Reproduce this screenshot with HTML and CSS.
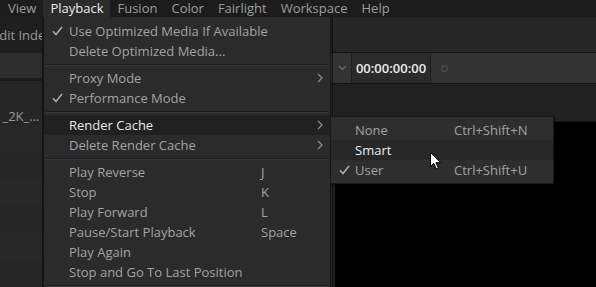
FILE: index.html
```html
<!DOCTYPE html>
<html lang="en">
<head>
    <meta charset="UTF-8">
    <title>Playback menu</title>
    <link rel="stylesheet" href="styles.css">
</head>
<body>
    <div class="menubar">
        <span class="menubar-item first">View</span>
        <span class="menubar-item activo">Playback</span>
        <span class="menubar-item">Fusion</span>
        <span class="menubar-item">Color</span>
        <span class="menubar-item">Fairlight</span>
        <span class="menubar-item">Workspace</span>
        <span class="menubar-item">Help</span>
    </div>

    <div class="workspace">
        <div class="col-left">
            <div class="left-top"><span class="clip-text">Edit Index</span></div>
            <div class="toolbar"></div>
            <div class="lista">
                <div class="fila fila-texto"><span class="clip-file">1_2K_...</span></div>
                <div class="fila"></div>
                <div class="fila"></div>
                <div class="fila"></div>
                <div class="fila"></div>
                <div class="fila"></div>
                <div class="fila"></div>
            </div>
        </div>
        <div class="col-mid">
            <div class="left-top"></div>
            <div class="toolbar"></div>
        </div>
        <div class="col-right">
            <div class="right-top"></div>
            <div class="toolbar tc-bar">
                <span class="tc-chevron">
                    <svg width="9" height="6" viewBox="0 0 9 6"><path d="M1 1 L4.5 4.5 L8 1" fill="none" stroke="#6a6a6a" stroke-width="1.2"/></svg>
                </span>
                <span class="timecode">00:00:00:00</span>
                <span class="tc-dot"></span>
            </div>
            <div class="right-gap"></div>
            <div class="viewer"></div>
        </div>
    </div>

    <!-- Playback dropdown -->
    <div class="menu">
        <div class="menu-row">
            <span class="check"><svg width="11" height="10" viewBox="0 0 11 10"><path d="M1 5.2 L4 8.6 L10 1" fill="none" stroke="#a8a8a8" stroke-width="1.6"/></svg></span>
            <span class="label">Use Optimized Media If Available</span>
        </div>
        <div class="menu-row"><span class="check"></span><span class="label">Delete Optimized Media...</span></div>
        <div class="sep"></div>
        <div class="menu-row">
            <span class="check"></span><span class="label">Proxy Mode</span><span class="atajo"></span>
            <span class="flecha"><svg width="6" height="10" viewBox="0 0 6 10"><path d="M1 1 L5 5 L1 9" fill="none" stroke="#8a8a8a" stroke-width="1.3"/></svg></span>
        </div>
        <div class="menu-row">
            <span class="check"><svg width="11" height="10" viewBox="0 0 11 10"><path d="M1 5.2 L4 8.6 L10 1" fill="none" stroke="#a8a8a8" stroke-width="1.6"/></svg></span>
            <span class="label">Performance Mode</span>
        </div>
        <div class="sep"></div>
        <div class="menu-row resaltado">
            <span class="check"></span><span class="label">Render Cache</span><span class="atajo"></span>
            <span class="flecha"><svg width="6" height="10" viewBox="0 0 6 10"><path d="M1 1 L5 5 L1 9" fill="none" stroke="#8a8a8a" stroke-width="1.3"/></svg></span>
        </div>
        <div class="menu-row">
            <span class="check"></span><span class="label">Delete Render Cache</span><span class="atajo"></span>
            <span class="flecha"><svg width="6" height="10" viewBox="0 0 6 10"><path d="M1 1 L5 5 L1 9" fill="none" stroke="#8a8a8a" stroke-width="1.3"/></svg></span>
        </div>
        <div class="sep"></div>
        <div class="menu-row"><span class="check"></span><span class="label">Play Reverse</span><span class="atajo">J</span></div>
        <div class="menu-row"><span class="check"></span><span class="label">Stop</span><span class="atajo">K</span></div>
        <div class="menu-row"><span class="check"></span><span class="label">Play Forward</span><span class="atajo">L</span></div>
        <div class="menu-row"><span class="check"></span><span class="label">Pause/Start Playback</span><span class="atajo">Space</span></div>
        <div class="menu-row"><span class="check"></span><span class="label">Play Again</span></div>
        <div class="menu-row"><span class="check"></span><span class="label">Stop and Go To Last Position</span></div>
        <div class="sep"></div>
    </div>

    <!-- Render Cache submenu -->
    <div class="submenu">
        <div class="sub-row"><span class="check"></span><span class="label">None</span><span class="atajo">Ctrl+Shift+N</span></div>
        <div class="sub-row resaltado"><span class="check"></span><span class="label">Smart</span><span class="atajo"></span></div>
        <div class="sub-row">
            <span class="check"><svg width="11" height="10" viewBox="0 0 11 10"><path d="M1 5.2 L4 8.6 L10 1" fill="none" stroke="#a8a8a8" stroke-width="1.6"/></svg></span>
            <span class="label">User</span><span class="atajo">Ctrl+Shift+U</span>
        </div>
    </div>

    <svg class="cursor" width="12" height="18" viewBox="0 0 12 18">
        <path d="M0.5 0.5 V14.6 L3.8 11.4 L6.3 16.8 L8.4 15.9 L5.9 10.7 H10.6 Z" fill="#ffffff" stroke="#000000" stroke-width="1" stroke-linejoin="round"/>
    </svg>
</body>
</html>
```

FILE: styles.css
```css
body {
    margin: 0;
    width: 596px;
    height: 287px;
    overflow: hidden;
    background: #222222;
    font-family: "Open Sans", "Liberation Sans", sans-serif;
    font-size: 13px;
    color: #a3a3a3;
    position: relative;
}
.menubar {
    height: 17px;
    background: #1c1c1c;
    display: flex;
    line-height: 16px;
}
.menubar-item {
    padding: 0 7px;
    color: #9c9c9c;
}
.menubar-item.first {
    padding-left: 8px;
    padding-right: 7px;
    margin-left: 0;
}
.menubar-item.activo {
    background: #2b2b2b;
    color: #ececec;
}
.workspace {
    display: grid;
    grid-template-columns: 43px 289px 1fr;
    height: 270px;
}
.col-left, .col-mid, .col-right {
    display: flex;
    flex-direction: column;
    overflow: hidden;
}
.col-left {
    border-right: 1px solid #121212;
    box-sizing: border-box;
}
.left-top {
    height: 36px;
    background: #1f1f1f;
    line-height: 36px;
    white-space: nowrap;
}
.clip-text {
    margin-left: -8px;
    color: #9a9a9a;
}
.toolbar {
    height: 30px;
    background: #2d2d2d;
    border-bottom: 3px solid #1b1b1b;
}
.lista {
    flex: 1;
    background: #262626;
    padding-top: 17px;
}
.fila {
    height: 27px;
}
.fila:nth-child(even) {
    background: #282828;
}
.fila-texto {
    white-space: nowrap;
    padding-top: 9px;
    box-sizing: border-box;
    line-height: 18px;
}
.clip-file {
    margin-left: -5px;
    color: #9a9a9a;
}
.col-right {
    border-left: 1px solid #121212;
    background: #222222;
}
.right-top {
    height: 36px;
    background: #262626;
    border-bottom: 1px solid #151515;
    box-sizing: border-box;
}
.tc-bar {
    display: flex;
    align-items: stretch;
    background: #333333;
    border-bottom: 0;
    box-sizing: border-box;
}
.tc-chevron {
    width: 18px;
    display: flex;
    align-items: center;
    justify-content: center;
}
.timecode {
    width: 80px;
    background: #2b2b2b;
    border-left: 1px solid #1e1e1e;
    border-right: 1px solid #1e1e1e;
    box-sizing: border-box;
    color: #ececec;
    font-weight: 600;
    font-size: 13px;
    display: flex;
    align-items: center;
    justify-content: center;
}
.tc-dot {
    width: 5px;
    height: 5px;
    border: 1px solid #5a5a5a;
    border-radius: 50%;
    align-self: center;
    margin-left: 10px;
}
.right-gap {
    height: 39px;
    background: #212121;
    border-top: 1px solid #141414;
    border-bottom: 1px solid #141414;
    box-sizing: border-box;
}
.viewer {
    flex: 1;
    background: #000000;
    margin-left: 2px;
}
.menu {
    position: absolute;
    left: 43px;
    top: 17px;
    width: 288px;
    height: 275px;
    box-sizing: border-box;
    background: #2b2b2b;
    border-left: 1px solid #161616;
    border-right: 1px solid #161616;
    padding-top: 4px;
}
.menu-row {
    display: grid;
    grid-template-columns: 25px 192px 49px 20px;
    height: 20px;
    line-height: 20px;
    white-space: nowrap;
}
.check {
    display: flex;
    align-items: center;
    justify-content: center;
    padding-left: 2px;
}
.flecha {
    display: flex;
    align-items: center;
    justify-content: center;
}
.resaltado {
    background: #212121;
    color: #e8e8e8;
}
.sep {
    height: 7px;
    padding-top: 3px;
    box-sizing: border-box;
}
.sep::after {
    content: "";
    display: block;
    margin: 0 2px;
    height: 1px;
    background: #1d1d1d;
    border-bottom: 1px solid #3a3a3a;
}
.submenu {
    position: absolute;
    left: 330px;
    top: 116px;
    width: 224px;
    height: 68px;
    box-sizing: border-box;
    background: #2e2e2e;
    border: 1px solid #181818;
    padding-top: 3px;
    box-shadow: 1px 1px 2px rgba(0, 0, 0, 0.6);
}
.sub-row {
    display: grid;
    grid-template-columns: 24px 99px 1fr;
    height: 20px;
    line-height: 20px;
    white-space: nowrap;
}
.sub-row.resaltado {
    background: #272727;
    color: #ececec;
}
.cursor {
    position: absolute;
    left: 430px;
    top: 152px;
}
```
